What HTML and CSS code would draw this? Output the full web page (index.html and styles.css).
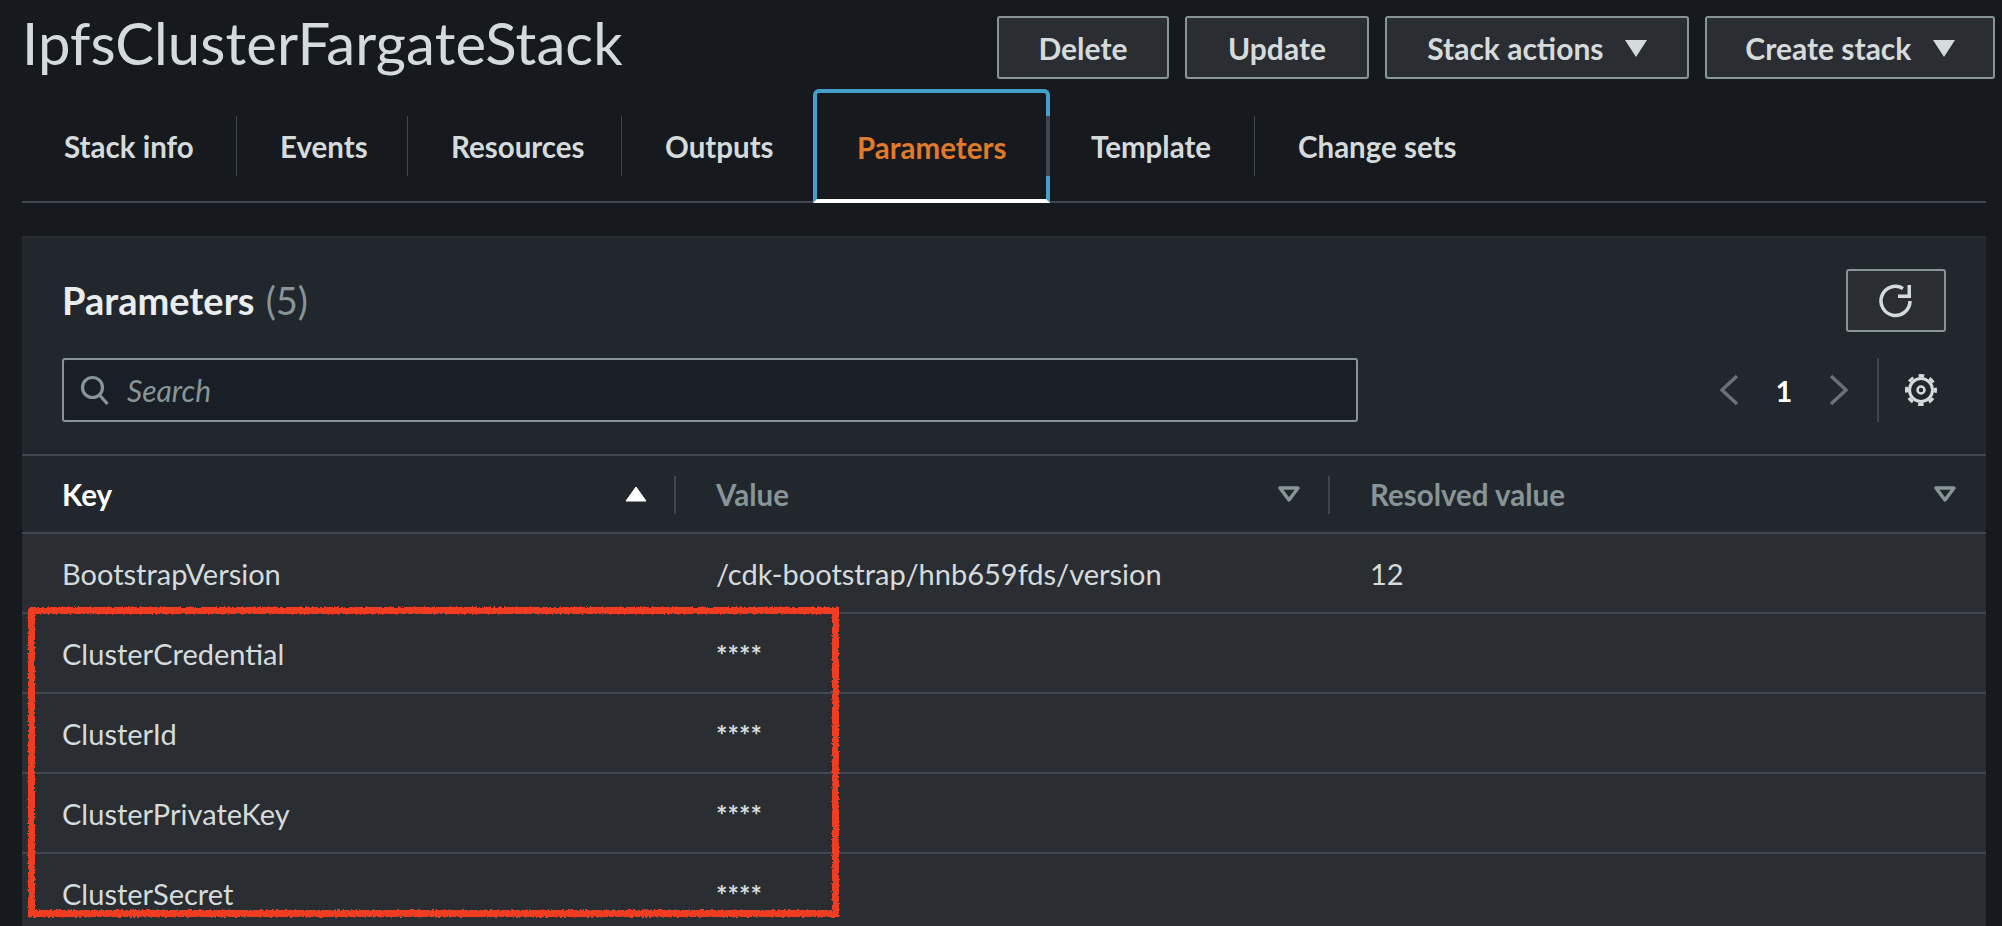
FILE: index.html
```html
<!DOCTYPE html>
<html lang="en">
<head>
  <meta charset="UTF-8" />
  <title>IpfsClusterFargateStack</title>
  <link rel="stylesheet" href="styles.css">
</head>
<body>
  <div class="page">
    <header class="top">
      <h1>IpfsClusterFargateStack</h1>
      <div class="actions">
        <button class="btn btn-delete">Delete</button>
        <button class="btn btn-update">Update</button>
        <button class="btn btn-stack">Stack actions <span class="caret"></span></button>
        <button class="btn btn-create">Create stack <span class="caret"></span></button>
      </div>
    </header>

    <nav class="tabs">
      <a class="tab tab-info">Stack info</a>
      <a class="tab tab-events">Events</a>
      <a class="tab tab-resources">Resources</a>
      <a class="tab tab-outputs no-line">Outputs</a>
      <a class="tab active">Parameters</a>
      <a class="tab tab-template">Template</a>
      <a class="tab no-line">Change sets</a>
    </nav>

    <section class="card">
      <div class="card-head">
        <div class="title-row">
          <h2>Parameters <span class="count">(5)</span></h2>
          <button class="btn-refresh" aria-label="Refresh">
            <svg width="34" height="34" viewBox="0 0 34 34" fill="none">
              <path d="M31 17A14.5 14.5 0 1 1 24 4.5" stroke="#d5dbdb" stroke-width="3.5"/>
              <path d="M32 1v13H19v-3.500h9.500V1z" fill="#d5dbdb"/>
            </svg>
          </button>
        </div>
        <div class="tools-row">
          <div class="search">
            <svg width="30" height="30" viewBox="0 0 30 30" fill="none" stroke="#879596" stroke-width="3.2">
              <circle cx="12.5" cy="12.5" r="10"/>
              <path d="M19.5 20l8 9"/>
            </svg>
            <span>Search</span>
          </div>
          <div class="pager">
            <svg width="20" height="32" viewBox="0 0 20 32" fill="none" stroke="#687078" stroke-width="3.5"><path d="M18 2L3 16l15 14"/></svg>
            <span class="page-num">1</span>
            <svg width="20" height="32" viewBox="0 0 20 32" fill="none" stroke="#687078" stroke-width="3.5"><path d="M2 2l15 14L2 30"/></svg>
            <i class="pager-sep"></i>
            <svg width="34" height="34" viewBox="0 0 34 34" fill="none" stroke="#d5dbdb">
              <circle cx="17" cy="17" r="14.500" stroke-width="3" stroke-dasharray="5.700 5.690" stroke-dashoffset="2.850"/>
              <circle cx="17" cy="17" r="11.500" stroke-width="3"/>
              <circle cx="17" cy="17" r="3.500" stroke-width="2.500"/>
            </svg>
          </div>
        </div>
      </div>

      <div class="row head-row">
        <div class="cell sorted">Key
          <svg class="sort" width="22" height="16" viewBox="0 0 22 16"><path d="M11 1l10 14H1z" fill="#fff" stroke="#fff" stroke-linejoin="round"/></svg>
        </div>
        <div class="cell">Value
          <svg class="sort" width="22" height="16" viewBox="0 0 22 16"><path d="M2 2h18l-9 12z" fill="none" stroke="#879596" stroke-width="3.500" stroke-linejoin="round"/></svg>
        </div>
        <div class="cell">Resolved value
          <svg class="sort" width="22" height="16" viewBox="0 0 22 16"><path d="M2 2h18l-9 12z" fill="none" stroke="#879596" stroke-width="3.500" stroke-linejoin="round"/></svg>
        </div>
      </div>

      <div class="row"><div class="cell">BootstrapVersion</div><div class="cell">/cdk-bootstrap/hnb659fds/version</div><div class="cell">12</div></div>
      <div class="row"><div class="cell">ClusterCredential</div><div class="cell stars">****</div><div class="cell"></div></div>
      <div class="row"><div class="cell">ClusterId</div><div class="cell stars">****</div><div class="cell"></div></div>
      <div class="row"><div class="cell">ClusterPrivateKey</div><div class="cell stars">****</div><div class="cell"></div></div>
      <div class="row"><div class="cell">ClusterSecret</div><div class="cell stars">****</div><div class="cell"></div></div>
    </section>

    <!-- hand drawn highlight on top of the table -->
    <div class="highlight"></div>
    <svg class="defs" width="0" height="0">
      <filter id="rough" x="-2%" y="-2%" width="104%" height="104%">
        <feTurbulence type="fractalNoise" baseFrequency="0.5" numOctaves="2" seed="4"/>
        <feDisplacementMap in="SourceGraphic" scale="4"/>
      </filter>
    </svg>
  </div>
</body>
</html>
```

FILE: styles.css
```css
html, body {
  margin: 0;
  height: 926px;
  overflow: hidden;
  background: #16191e;
}
body {
  font-family: Lato, "Open Sans", sans-serif;
  color: #d5dbdb;
}
.page {
  position: relative;
  height: 926px;
  overflow: hidden;
  padding: 16px 7px 0 22px;
  box-sizing: border-box;
}
.top {
  display: flex;
  justify-content: space-between;
  height: 63px;
}
h1 {
  margin: -3px 0 0;
  font-size: 58px;
  font-weight: 400;
  line-height: 60px;
  letter-spacing: 0.1px;
}
.actions {
  display: flex;
  gap: 16px;
}
.btn {
  height: 63px;
  box-sizing: border-box;
  background: #2a2e33;
  border: 2px solid #879596;
  border-radius: 3px;
  color: #d5dbdb;
  font: 700 30px Lato, sans-serif;
  padding: 0;
  white-space: nowrap;
}
.btn-delete { width: 172px; }
.btn-update { width: 184px; }
.btn-stack { width: 304px; }
.btn-create { width: 290px; }
.caret {
  display: inline-block;
  width: 0;
  height: 0;
  margin-left: 14px;
  vertical-align: 3px;
  border-left: 11px solid transparent;
  border-right: 11px solid transparent;
  border-top: 17px solid #d5dbdb;
}

.tabs {
  display: flex;
  height: 113px;
  margin: 11px 9px 0 0;
  border-bottom: 2px solid #414750;
  box-sizing: border-box;
}
.tab {
  display: flex;
  align-items: center;
  position: relative;
  padding: 1px 0 0 43px;
  font-size: 29.5px;
  font-weight: 700;
  color: #d5dbdb;
  white-space: nowrap;
  box-sizing: border-box;
}
.tab-info { width: 215px; padding-left: 42px; }
.tab-events { width: 171px; }
.tab-resources { width: 214px; }
.tab-outputs { width: 191px; }
.tab-template { width: 205px; padding-left: 41px; }
.tab::after {
  content: "";
  position: absolute;
  right: 0;
  top: 26px;
  height: 60px;
  width: 1px;
  background: #414750;
}
.tab.no-line::after { display: none; }
.tab.active {
  color: #e07a2c;
  width: 237px;
  margin: -1px 0 -2px;
  border: 4px solid #44a0c8;
  border-bottom: 4px solid #fff;
  border-radius: 6px 6px 0 0;
  background: #16191e;
  padding: 2px 0 0 40px;
}
.tab.active::after {
  right: -4px;
  top: 23px;
  width: 4px;
}

.card {
  margin: 33px 9px 0 0;
  background: #22262d;
  border-top: 2px solid #2a2e33;
}
.card-head {
  padding: 31px 40px 32px 40px;
  height: 218px;
  box-sizing: border-box;
  border-bottom: 2px solid #414750;
}
.title-row {
  display: flex;
  justify-content: space-between;
  height: 63px;
}
h2 {
  margin: 0;
  font-size: 38px;
  font-weight: 700;
  line-height: 63px;
  color: #eaeded;
}
.count {
  margin-left: 2px;
  font-weight: 400;
  color: #879596;
}
.btn-refresh {
  width: 100px;
  height: 63px;
  box-sizing: border-box;
  display: flex;
  align-items: center;
  justify-content: center;
  background: #2a2e33;
  border: 2px solid #879596;
  border-radius: 3px;
  padding: 0;
}
.tools-row {
  display: flex;
  justify-content: space-between;
  margin-top: 26px;
  height: 64px;
}
.search {
  display: flex;
  align-items: center;
  gap: 17px;
  width: 1296px;
  box-sizing: border-box;
  padding-left: 16px;
  background: #191e27;
  border: 2px solid #879596;
  border-radius: 3px;
  font-size: 30px;
  font-style: italic;
  color: #879596;
}
.pager {
  display: flex;
  align-items: center;
  height: 64px;
  margin-right: 8px;
}
.page-num {
  width: 90px;
  text-align: center;
  font-size: 29px;
  font-weight: 700;
  color: #fff;
}
.pager-sep {
  width: 2px;
  height: 64px;
  margin: 0 25px 0 28px;
  background: #414750;
}

.row {
  display: grid;
  grid-template-columns: 654px 654px 1fr;
  height: 80px;
  box-sizing: border-box;
  background: #2a2e33;
  border-bottom: 2px solid #414750;
  font-size: 29px;
}
.cell {
  display: flex;
  align-items: center;
  justify-content: space-between;
  padding: 0 30px 0 40px;
  white-space: nowrap;
}
.head-row {
  height: 78px;
  background: #22262d;
  font-size: 29.5px;
  font-weight: 700;
  color: #879596;
}
.head-row .cell {
  position: relative;
}
.head-row .cell + .cell::before {
  content: "";
  position: absolute;
  left: -2px;
  top: 20px;
  height: 38px;
  width: 2px;
  background: #414750;
}
.head-row .sorted {
  color: #fff;
  padding-right: 29px;
}
.stars {
  align-items: flex-start;
  padding-top: 24px;
  font-size: 27px;
  font-weight: 700;
}

.highlight {
  position: absolute;
  left: 28px;
  top: 607px;
  width: 811px;
  height: 310px;
  box-sizing: border-box;
  border: 7px solid #f03c23;
  filter: url(#rough);
}
.defs {
  position: absolute;
}
```
